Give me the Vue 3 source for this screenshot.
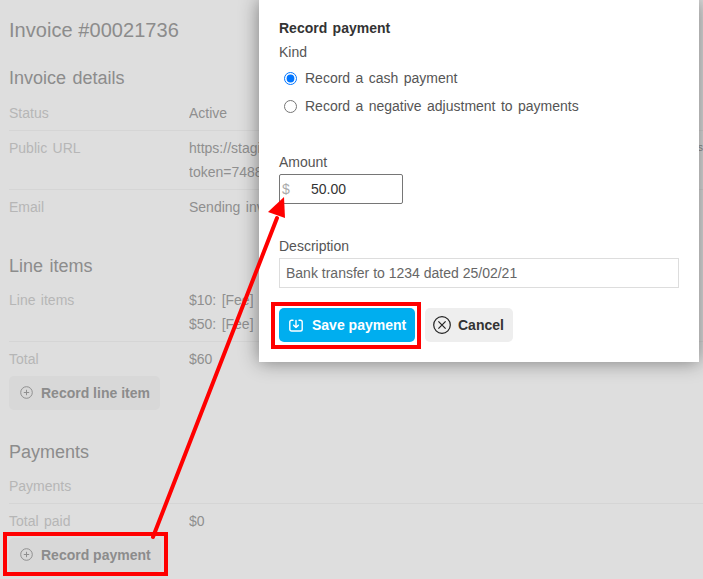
<template>
  <div class="screen">
    <!-- dimmed invoice page behind the dialog -->
    <main class="page">
      <h1>Invoice #00021736</h1>

      <h2>Invoice details</h2>
      <div class="row">
        <div class="label">Status</div>
        <div class="value">Active</div>
      </div>
      <div class="row">
        <div class="label">Public URL</div>
        <div class="value">https://stagi<br />token=7488</div>
        <div class="edge">s</div>
      </div>
      <div class="row last">
        <div class="label">Email</div>
        <div class="value">Sending inv</div>
      </div>

      <h2 class="spaced">Line items</h2>
      <div class="row">
        <div class="label">Line items</div>
        <div class="value">$10: [Fee]<br />$50: [Fee]</div>
      </div>
      <div class="row last">
        <div class="label">Total</div>
        <div class="value">$60</div>
      </div>
      <button class="ghost-btn" type="button">
        <svg width="13" height="13" viewBox="0 0 13 13" fill="none" stroke="#8f8f8f">
          <circle cx="6.5" cy="6.5" r="5.8" />
          <path d="M6.5 3.8v5.4M3.8 6.5h5.4" />
        </svg>
        Record line item
      </button>

      <h2 class="spaced">Payments</h2>
      <div class="row">
        <div class="label">Payments</div>
        <div class="value"></div>
      </div>
      <div class="row last">
        <div class="label">Total paid</div>
        <div class="value">$0</div>
      </div>
      <button class="ghost-btn" type="button">
        <svg width="13" height="13" viewBox="0 0 13 13" fill="none" stroke="#8f8f8f">
          <circle cx="6.5" cy="6.5" r="5.8" />
          <path d="M6.5 3.8v5.4M3.8 6.5h5.4" />
        </svg>
        Record payment
      </button>
    </main>

    <!-- dialog -->
    <section class="modal">
      <div class="modal-title">Record payment</div>
      <div class="field-label">Kind</div>
      <label class="radio">
        <input type="radio" name="kind" checked />
        Record a cash payment
      </label>
      <label class="radio">
        <input type="radio" name="kind" />
        Record a negative adjustment to payments
      </label>

      <div class="field-label amount-label">Amount</div>
      <div class="amount">
        <span class="currency">$</span>
        <span>50.00</span>
      </div>

      <div class="field-label desc-label">Description</div>
      <div class="desc">Bank transfer to 1234 dated 25/02/21</div>

      <div class="actions">
        <button class="save" type="button">
          <svg width="14" height="14" viewBox="0 0 14 14" fill="none" stroke="#fff" stroke-width="1.4" stroke-linecap="round" stroke-linejoin="round">
            <path d="M4 2.2H2.6A1.8 1.8 0 0 0 .8 4v7.2A1.8 1.8 0 0 0 2.6 13h8.8a1.8 1.8 0 0 0 1.8-1.8V4a1.8 1.8 0 0 0-1.8-1.8H10" />
            <path d="M7 2.5v7M4.6 7.2 7 9.6l2.4-2.4" />
          </svg>
          Save payment
        </button>
        <button class="cancel" type="button">
          <svg width="18" height="18" viewBox="0 0 18 18" fill="none" stroke="#222" stroke-width="1.2">
            <circle cx="9" cy="9" r="8.3" />
            <path d="M5.4 5.4l7.2 7.2M12.6 5.4l-7.2 7.2" />
          </svg>
          Cancel
        </button>
      </div>
    </section>

    <!-- red annotations drawn on top of the screenshot -->
    <div class="callout callout-record"></div>
    <div class="callout callout-save"></div>
    <svg class="arrow" width="703" height="579" viewBox="0 0 703 579">
      <path d="M153 537 277 218" stroke="#f00" stroke-width="4" stroke-linecap="round" fill="none" />
      <path d="M284 197 268 212 285 218Z" fill="#f00" />
    </svg>
  </div>
</template>

<script setup>
</script>

<style>
html, body {
  margin: 0;
  background: #dedede;
}
</style>

<style scoped>
.screen {
  position: relative;
  width: 703px;
  height: 579px;
  overflow: hidden;
  background: #dedede;
  font-family: "Liberation Sans", Arial, sans-serif;
  font-size: 14px;
  word-spacing: 1.5px;
}

/* Page behind the dialog */
.page {
  padding: 18px 0 0 9px;
}
h1 {
  margin: 0;
  font-size: 20px;
  line-height: 24px;
  font-weight: 400;
  color: #8c8c8c;
  letter-spacing: 0.05px;
  word-spacing: 0;
}
h2 {
  margin: 25px 0 6px;
  font-size: 18px;
  line-height: 22px;
  font-weight: 400;
  color: #8c8c8c;
}
h2.spaced {
  margin-top: 31px;
}
.row {
  display: grid;
  grid-template-columns: 180px 70px 1fr;
  border-bottom: 1px solid #d5d5d5;
  padding: 5.5px 0 5px;
  line-height: 24px;
}
.row.last {
  border-bottom: 0;
  padding: 5px 0 4.5px;
}
.label {
  color: #b6b6b6;
}
.value {
  color: #8f8f8f;
  min-height: 24px;
  overflow: hidden;
  white-space: nowrap;
}
/* sliver of the long URL showing to the right of the dialog */
.edge {
  color: #8f8f8f;
  text-align: right;
  overflow: hidden;
  font-size: 10px;
}
.ghost-btn {
  display: flex;
  align-items: center;
  gap: 8px;
  height: 34px;
  padding: 0 10px 0 11px;
  border: 0;
  border-radius: 5px;
  background: #d8d8d8;
  color: #8c8c8c;
  font: bold 14px "Liberation Sans", Arial, sans-serif;
  word-spacing: 0;
}

/* Dialog */
.modal {
  position: absolute;
  top: 0;
  left: 259px;
  width: 400px;
  height: 342px;
  padding: 20px 20px 0;
  background: #fff;
  box-shadow: 0 0 18px rgba(0, 0, 0, 0.45);
  color: #555;
  line-height: 16px;
}
.modal-title {
  font-weight: bold;
  color: #333;
}
.field-label {
  margin-top: 8px;
}
.radio {
  display: flex;
  align-items: center;
  gap: 8px;
  height: 28px;
  padding-left: 5px;
}
.radio:first-of-type {
  margin-top: 4px;
}
.radio input {
  width: 13px;
  height: 13px;
  margin: 0;
}
.amount-label {
  margin-top: 34px;
}
.amount {
  box-sizing: border-box;
  display: flex;
  align-items: center;
  width: 124px;
  height: 30px;
  margin-top: 4px;
  padding-left: 2px;
  border: 1px solid #767676;
  border-radius: 2px;
  color: #333;
}
.currency {
  width: 29px;
  color: #aaa;
}
.desc-label {
  margin-top: 34px;
}
.desc {
  box-sizing: border-box;
  height: 30px;
  margin-top: 4px;
  padding: 0 6px;
  border: 1px solid #ddd;
  line-height: 28px;
  color: #666;
  word-spacing: 0;
}
.actions {
  display: flex;
  gap: 10px;
  margin-top: 20px;
}
.save,
.cancel {
  display: flex;
  align-items: center;
  height: 34px;
  border: 0;
  border-radius: 5px;
  font: bold 14px "Liberation Sans", Arial, sans-serif;
  padding: 0;
  word-spacing: 0;
}
.save {
  width: 136px;
  padding-left: 10px;
  gap: 9px;
  background: #00aeef;
  color: #fff;
}
.cancel {
  width: 88px;
  padding-left: 8px;
  gap: 7px;
  background: #eee;
  color: #333;
}

/* Annotations */
.callout {
  position: absolute;
  box-sizing: border-box;
  border: 4px solid #f00;
}
.callout-record {
  left: 3px;
  top: 532px;
  width: 165px;
  height: 44px;
}
.callout-save {
  left: 271px;
  top: 302px;
  width: 150px;
  height: 47px;
}
.arrow {
  position: absolute;
  inset: 0;
  pointer-events: none;
}
</style>
